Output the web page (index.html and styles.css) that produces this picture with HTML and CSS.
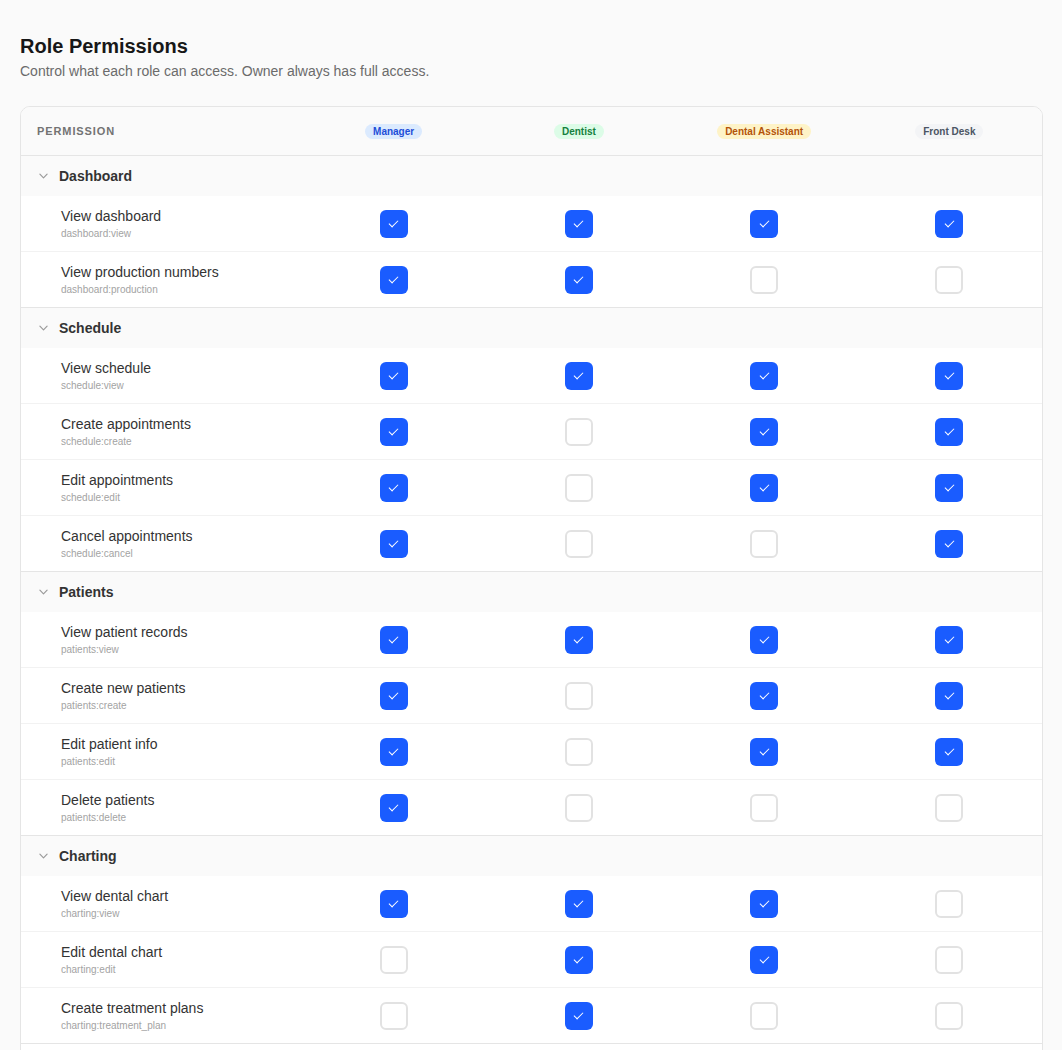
FILE: index.html
```html
<!DOCTYPE html>
<html lang="en">
<head>
    <meta charset="UTF-8">
    <title>Role Permissions</title>
    <link rel="stylesheet" href="styles.css">
</head>
<body>
    <div class="page">
        <h1 class="title">Role Permissions</h1>
        <p class="subtitle">Control what each role can access. Owner always has full access.</p>

        <div class="card">
            <div class="row head-row">
                <div class="head-label">Permission</div>
                <div class="cell"><span class="badge badge-manager">Manager</span></div>
                <div class="cell"><span class="badge badge-dentist">Dentist</span></div>
                <div class="cell"><span class="badge badge-assistant">Dental Assistant</span></div>
                <div class="cell"><span class="badge badge-desk">Front Desk</span></div>
            </div>

            <!-- Dashboard -->
            <div class="group">
                <div class="group-row">
                    <svg class="chevron" viewBox="0 0 10 6"><polyline points="1 1 5 5 9 1"/></svg>
                    <span>Dashboard</span>
                </div>
                <div class="row perm-row">
                    <div class="perm"><div class="perm-name">View dashboard</div><div class="perm-key">dashboard:view</div></div>
                    <div class="cell"><span class="box on"></span></div>
                    <div class="cell"><span class="box on"></span></div>
                    <div class="cell"><span class="box on"></span></div>
                    <div class="cell"><span class="box on"></span></div>
                </div>
                <div class="row perm-row">
                    <div class="perm"><div class="perm-name">View production numbers</div><div class="perm-key">dashboard:production</div></div>
                    <div class="cell"><span class="box on"></span></div>
                    <div class="cell"><span class="box on"></span></div>
                    <div class="cell"><span class="box"></span></div>
                    <div class="cell"><span class="box"></span></div>
                </div>
            </div>

            <!-- Schedule -->
            <div class="group">
                <div class="group-row">
                    <svg class="chevron" viewBox="0 0 10 6"><polyline points="1 1 5 5 9 1"/></svg>
                    <span>Schedule</span>
                </div>
                <div class="row perm-row">
                    <div class="perm"><div class="perm-name">View schedule</div><div class="perm-key">schedule:view</div></div>
                    <div class="cell"><span class="box on"></span></div>
                    <div class="cell"><span class="box on"></span></div>
                    <div class="cell"><span class="box on"></span></div>
                    <div class="cell"><span class="box on"></span></div>
                </div>
                <div class="row perm-row">
                    <div class="perm"><div class="perm-name">Create appointments</div><div class="perm-key">schedule:create</div></div>
                    <div class="cell"><span class="box on"></span></div>
                    <div class="cell"><span class="box"></span></div>
                    <div class="cell"><span class="box on"></span></div>
                    <div class="cell"><span class="box on"></span></div>
                </div>
                <div class="row perm-row">
                    <div class="perm"><div class="perm-name">Edit appointments</div><div class="perm-key">schedule:edit</div></div>
                    <div class="cell"><span class="box on"></span></div>
                    <div class="cell"><span class="box"></span></div>
                    <div class="cell"><span class="box on"></span></div>
                    <div class="cell"><span class="box on"></span></div>
                </div>
                <div class="row perm-row">
                    <div class="perm"><div class="perm-name">Cancel appointments</div><div class="perm-key">schedule:cancel</div></div>
                    <div class="cell"><span class="box on"></span></div>
                    <div class="cell"><span class="box"></span></div>
                    <div class="cell"><span class="box"></span></div>
                    <div class="cell"><span class="box on"></span></div>
                </div>
            </div>

            <!-- Patients -->
            <div class="group">
                <div class="group-row">
                    <svg class="chevron" viewBox="0 0 10 6"><polyline points="1 1 5 5 9 1"/></svg>
                    <span>Patients</span>
                </div>
                <div class="row perm-row">
                    <div class="perm"><div class="perm-name">View patient records</div><div class="perm-key">patients:view</div></div>
                    <div class="cell"><span class="box on"></span></div>
                    <div class="cell"><span class="box on"></span></div>
                    <div class="cell"><span class="box on"></span></div>
                    <div class="cell"><span class="box on"></span></div>
                </div>
                <div class="row perm-row">
                    <div class="perm"><div class="perm-name">Create new patients</div><div class="perm-key">patients:create</div></div>
                    <div class="cell"><span class="box on"></span></div>
                    <div class="cell"><span class="box"></span></div>
                    <div class="cell"><span class="box on"></span></div>
                    <div class="cell"><span class="box on"></span></div>
                </div>
                <div class="row perm-row">
                    <div class="perm"><div class="perm-name">Edit patient info</div><div class="perm-key">patients:edit</div></div>
                    <div class="cell"><span class="box on"></span></div>
                    <div class="cell"><span class="box"></span></div>
                    <div class="cell"><span class="box on"></span></div>
                    <div class="cell"><span class="box on"></span></div>
                </div>
                <div class="row perm-row">
                    <div class="perm"><div class="perm-name">Delete patients</div><div class="perm-key">patients:delete</div></div>
                    <div class="cell"><span class="box on"></span></div>
                    <div class="cell"><span class="box"></span></div>
                    <div class="cell"><span class="box"></span></div>
                    <div class="cell"><span class="box"></span></div>
                </div>
            </div>

            <!-- Charting -->
            <div class="group">
                <div class="group-row">
                    <svg class="chevron" viewBox="0 0 10 6"><polyline points="1 1 5 5 9 1"/></svg>
                    <span>Charting</span>
                </div>
                <div class="row perm-row">
                    <div class="perm"><div class="perm-name">View dental chart</div><div class="perm-key">charting:view</div></div>
                    <div class="cell"><span class="box on"></span></div>
                    <div class="cell"><span class="box on"></span></div>
                    <div class="cell"><span class="box on"></span></div>
                    <div class="cell"><span class="box"></span></div>
                </div>
                <div class="row perm-row">
                    <div class="perm"><div class="perm-name">Edit dental chart</div><div class="perm-key">charting:edit</div></div>
                    <div class="cell"><span class="box"></span></div>
                    <div class="cell"><span class="box on"></span></div>
                    <div class="cell"><span class="box on"></span></div>
                    <div class="cell"><span class="box"></span></div>
                </div>
                <div class="row perm-row">
                    <div class="perm"><div class="perm-name">Create treatment plans</div><div class="perm-key">charting:treatment_plan</div></div>
                    <div class="cell"><span class="box"></span></div>
                    <div class="cell"><span class="box on"></span></div>
                    <div class="cell"><span class="box"></span></div>
                    <div class="cell"><span class="box"></span></div>
                </div>
            </div>
            <div class="card-rest"></div>
        </div>
    </div>
</body>
</html>
```

FILE: styles.css
```css
body {
    margin: 0;
    background-color: #FAFAFA;
    font-family: 'Liberation Sans', Arial, Helvetica, sans-serif;
    color: #1F1F1F;
}
.page {
    padding: 34px 19px 40px 20px;
}
.title {
    margin: 0;
    font-size: 20px;
    line-height: 24px;
    font-weight: 700;
    color: #171717;
}
.subtitle {
    margin: 4px 0 0;
    font-size: 14px;
    line-height: 18px;
    color: #6B6B6B;
}
.card {
    margin-top: 26px;
    background-color: #fff;
    border: 1px solid #E5E5E5;
    border-radius: 10px;
    overflow: hidden;
}
.row {
    display: grid;
    grid-template-columns: 280px repeat(4, 1fr);
    align-items: center;
}
.cell {
    display: flex;
    justify-content: center;
    align-items: center;
}
.head-row {
    height: 48px;
    background-color: #FAFAFA;
    border-bottom: 1px solid #E5E5E5;
}
.head-label {
    padding-left: 16px;
    font-size: 11px;
    font-weight: 700;
    letter-spacing: 0.9px;
    text-transform: uppercase;
    color: #737373;
}
.badge {
    display: inline-block;
    padding: 2px 8px;
    border-radius: 8px;
    font-size: 10px;
    line-height: 11px;
    font-weight: 700;
}
.badge-manager {
    background-color: #DBEAFE;
    color: #1D4ED8;
}
.badge-dentist {
    background-color: #DCFCE7;
    color: #15803D;
}
.badge-assistant {
    background-color: #FEF3C7;
    color: #B45309;
}
.badge-desk {
    background-color: #F3F4F6;
    color: #4B5563;
}
.group {
    border-bottom: 1px solid #E5E5E5;
}
.group-row {
    display: flex;
    align-items: center;
    height: 40px;
    padding-left: 18px;
    background-color: #FAFAFA;
    font-size: 14px;
    font-weight: 700;
    color: #333;
}
.chevron {
    width: 9px;
    height: 6px;
    margin-right: 11px;
    fill: none;
    stroke: #9A9A9A;
    stroke-width: 1.3;
    stroke-linecap: round;
    stroke-linejoin: round;
}
.perm-row {
    box-sizing: border-box;
    height: 56px;
    border-bottom: 1px solid #F2F2F2;
}
.perm-row:last-child {
    height: 55px;
    border-bottom: none;
}
.perm {
    padding-left: 40px;
}
.perm-name {
    font-size: 14px;
    line-height: 19px;
    color: #333;
}
.perm-key {
    margin-top: 1px;
    font-size: 10px;
    line-height: 14px;
    color: #A3A3A3;
}
.box {
    box-sizing: border-box;
    width: 28px;
    height: 28px;
    border: 2px solid #E2E2E2;
    border-radius: 6px;
    background-color: #fff;
    display: flex;
    justify-content: center;
    align-items: center;
}
.box.on {
    border: none;
    background-color: #1A5CFF;
}
.box.on::after {
    content: '';
    width: 8px;
    height: 4px;
    margin-top: -3px;
    border-left: 1.5px solid #fff;
    border-bottom: 1.5px solid #fff;
    transform: rotate(-45deg);
}
.card-rest {
    height: 40px;
}
```
